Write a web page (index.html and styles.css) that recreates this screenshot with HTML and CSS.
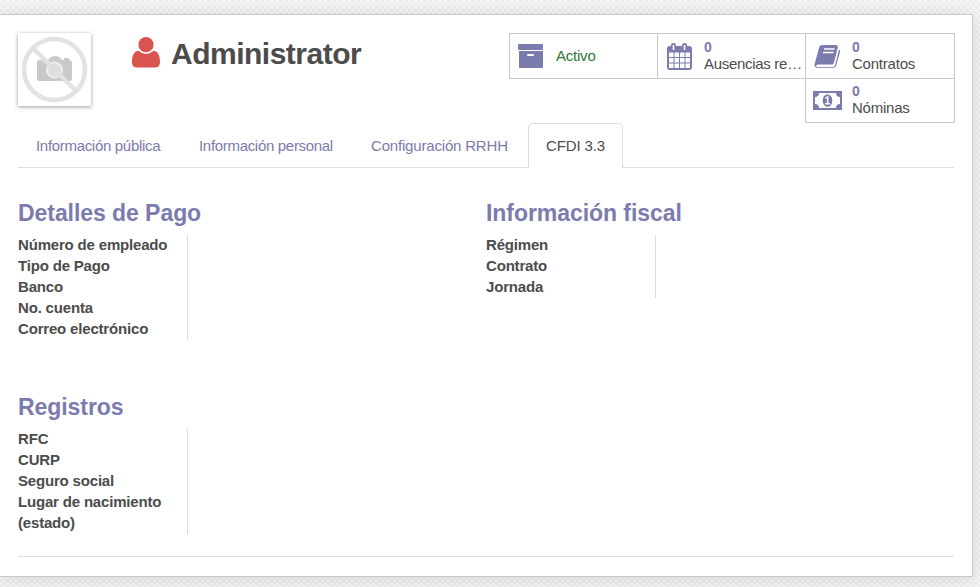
FILE: index.html
```html
<!DOCTYPE html>
<html lang="es">
<head>
<meta charset="utf-8">
<title>Administrator</title>
<link rel="stylesheet" href="styles.css">
</head>
<body>
<main class="sheet">
  <header class="header">
    <div class="photo">
      <svg width="73" height="73" viewBox="0 0 73 73">
        <path fill="#c9c9c9" d="M21 27h9q3-4 7-4t7 4h2v-2h5v2q3 0 3 3v16q0 2-2 2H22q-3 0-3-2V29q0-2 2-2z"/>
        <circle cx="36.500" cy="37" r="8.500" fill="#eee"/>
        <g fill="none" stroke="#e2e2e2" stroke-width="4.500"><circle cx="36.500" cy="36.500" r="30.500"/><path d="M15 15l43 43"/></g>
        <circle cx="36.500" cy="37" r="6.500" fill="#ddd"/>
      </svg>
    </div>
    <h1 class="name">
      <svg width="28" height="31" viewBox="0 0 28 31"><g fill="#d9534f"><circle cx="14" cy="7.700" r="7.600"/><path d="M6.500 13.800Q10 17 14 17t7.500-3.200C26 14 28 19 28 25q0 5.500-5 5.500H5q-5 0-5-5.500C0 19 2 14 6.500 13.800z"/></g></svg>
      <span>Administrator</span>
    </h1>
    <div class="buttons">
      <div class="stat">
        <svg class="icon" width="30" height="30" viewBox="0 0 30 30"><path fill="#7c7bad" fill-rule="evenodd" d="M2 4h23q1 0 1 1v4q0 1-1 1H2q-1 0-1-1V5q0-1 1-1zM2 11h24v16q0 1-1 1H3q-1 0-1-1zm9 3q-1 0-1 1t1 1h5q1 0 1-1t-1-1z"/></svg>
        <div class="active">Activo</div>
      </div>
      <div class="stat">
        <svg class="icon" width="30" height="30" viewBox="-1 0 30 30"><path fill="#7c7bad" fill-rule="evenodd" d="M4 6h1V5q0-2 2.500-2T10 5v1h6V5q0-2 2.500-2T21 5v1h2q3 0 3 2.500V27q0 3-3 3H4q-3 0-3-3V8.500Q1 6 4 6zM6.700 5v5h1.600V5zm11 0v5h1.600V5zM3 12.500V17h4.500v-4.500zm5.500 0V17H13v-4.500zm5.500 0V17h4.500v-4.500zm5.500 0V17H24v-4.500zM3 18v4.500h4.500V18zm5.500 0v4.500H13V18zm5.500 0v4.500h4.500V18zm5.500 0v4.500H24V18zM3 23.500V28h4.500v-4.500zm5.500 0V28H13v-4.500zm5.500 0V28h4.500v-4.500zm5.500 0V28H24v-4.500z"/></svg>
        <div class="info"><b>0</b><span>Ausencias restantes</span></div>
      </div>
      <div class="stat">
        <svg class="icon" width="30" height="30" viewBox="-1 -1 30 30"><path fill="#7c7bad" d="M8 4h14q2.500.5 1.700 3L20 21.500q-.5 2-2.500 2H4q-2 0-1.800 1.500T4 26.200h15q1.500 0 2-1.700l4-16q1.500.7 1 2.500L22 25q-.8 2-3.500 2H4Q.5 27 .5 23.500L5 7Q5.700 4 8 4z"/><path stroke="#fff" stroke-width="1.300" d="M10 8h10.500M9 11.500h10.500"/></svg>
        <div class="info"><b>0</b><span>Contratos</span></div>
      </div>
      <div class="stat second">
        <svg class="icon" width="30" height="30" viewBox="0 0 30 30"><path fill="#7c7bad" fill-rule="evenodd" d="M0 6h29v19H0zM6 8q0 4-4 4v7q4 0 4 4h17q0-4 4-4v-7q-4 0-4-4z"/><ellipse cx="14.500" cy="15.500" rx="4.800" ry="6.300" fill="#7c7bad"/><path fill="none" stroke="#fff" stroke-width="1.500" d="M12.500 13.500l2.200-1.700V18M12 18.800h5"/></svg>
        <div class="info"><b>0</b><span>Nóminas</span></div>
      </div>
    </div>
  </header>
  <nav class="tabs">
    <a class="tab t1"><span>Información pública</span></a>
    <a class="tab t2"><span>Información personal</span></a>
    <a class="tab t3"><span>Configuración RRHH</span></a>
    <a class="tab selected"><span>CFDI 3.3</span></a>
  </nav>
  <div class="groups">
    <section class="group">
      <h2>Detalles de Pago</h2>
      <div class="labels"><div>Número de empleado</div><div>Tipo de Pago</div><div>Banco</div><div>No. cuenta</div><div>Correo electrónico</div></div>
    </section>
    <section class="group">
      <h2>Información fiscal</h2>
      <div class="labels"><div>Régimen</div><div>Contrato</div><div>Jornada</div></div>
    </section>
    <section class="group">
      <h2>Registros</h2>
      <div class="labels"><div>RFC</div><div>CURP</div><div>Seguro social</div><div>Lugar de nacimiento (estado)</div></div>
    </section>
  </div>
</main>
</body>
</html>
```
FILE: styles.css
```css
* { box-sizing: border-box; }
body {
  margin: 0;
  height: 587px;
  padding-top: 14px;
  overflow: hidden;
  font: 15px/21px "Liberation Sans", Arial, sans-serif;
  color: #4c4c4c;
  background: repeating-conic-gradient(#eee 0 25%, #f8f8f8 0 50%) 0 0 / 6px 6px;
}
.sheet {
  width: 973px;
  height: 563px;
  padding: 18px 18px 0;
  border: 1px solid #c8c8d3;
  border-left: 0;
  background: #fff;
  box-shadow: 0 2px 18px rgba(0, 0, 0, .14);
}
.header { display: flex; height: 90px; }
.photo { width: 73px; height: 73px; flex: none; box-shadow: 0 1px 4px rgba(0,0,0,.4); }
.photo svg { display: block; }
.name {
  display: flex;
  width: 377px;
  flex: none;
  margin: 3px 0 0 41px;
  font-size: 30px;
  line-height: 36px;
  letter-spacing: -.5px;
}
.name svg { margin: 1px 11px 0 0; }
.buttons {
  display: grid;
  grid-template-columns: 148px 148px 150px;
  grid-template-rows: 45px 45px;
  width: 446px;
  flex: none;
  margin-left: auto;
  margin-right: -1px;
  letter-spacing: -.22px;
}
.stat {
  display: flex;
  border: 1px solid #c9c9c9;
  border-right: 0;
  height: 46px;
}
.stat:nth-child(n+3) { border-right: 1px solid #c9c9c9; }
.second { grid-column: 3; height: 45px; }
.icon { flex: none; margin: 6px 0 0 7px; }
.active { margin: 11px 0 0 9px; color: #307531; }
.info { min-width: 0; margin: 5px 0 0 9px; line-height: 17px; }
.info b { display: block; font-size: 14px; color: #7c7bad; line-height: 16px; }
.info span { display: block; overflow: hidden; white-space: nowrap; text-overflow: ellipsis; }
.stat:nth-child(2) { letter-spacing: -.3px; }
.stat:nth-child(2) .info { padding-right: 2px; }
.second .info { margin-top: 4px; }
.tabs {
  display: flex;
  height: 45px;
  padding-left: 18px;
  border-bottom: 1px solid #ddd;
}
.tab { padding-top: 12px; color: #7c7bad; white-space: nowrap; letter-spacing: -.31px; }
.t1 { width: 163px; }
.t2 { width: 172px; }
.t3 { width: 157px; letter-spacing: -.18px; }
.selected {
  width: 95px;
  height: 45px;
  padding: 11px 0 0 17px;
  border: 1px solid #ddd;
  border-bottom: 0;
  border-radius: 5px 5px 0 0;
  background: #fff;
  color: #4c4c4c;
  letter-spacing: -.12px;
}
.groups {
  display: grid;
  grid-template-columns: 468px 468px;
  grid-template-rows: 194px 194px;
  height: 389px;
  border-bottom: 1px solid #ddd;
}
.group { padding-top: 32px; }
h2 { margin: 0 0 8px; font-size: 23px; line-height: 27px; color: #7c7bad; white-space: nowrap; letter-spacing: -.06px; }
.labels {
  width: 170px;
  padding-right: 15px;
  border-right: 1px solid #ddd;
  font-weight: bold;
  letter-spacing: -.18px;
}
.labels div { height: 21px; line-height: 19px; }
.labels div:last-child { height: auto; line-height: 21px; margin-top: -1px; padding-bottom: 1px; }
```
